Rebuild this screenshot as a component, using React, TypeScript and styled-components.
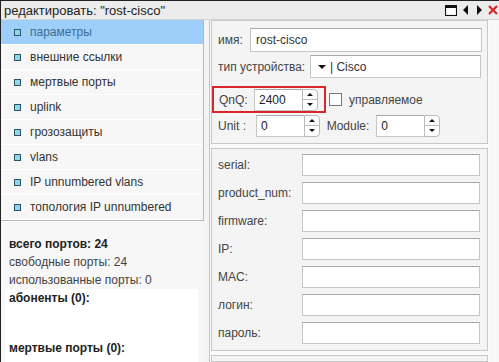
import React from "react";
import styled, { createGlobalStyle } from "styled-components";

const Global = createGlobalStyle`
  html, body { margin: 0; padding: 0; background: #fff; }
  body { font-family: "Liberation Sans", Arial, sans-serif; font-size: 12px; color: #333; }
  * { box-sizing: border-box; }
`;

const Win = styled.div`
  width: 499px;
  height: 362px;
  display: flex;
  flex-direction: column;
  border-top: 1px solid #222;
  border-left: 1px solid #222;
  overflow: hidden;
  background: #f4f4f4;
`;

const TitleBar = styled.div`
  height: 19px;
  flex: none;
  display: flex;
  align-items: center;
  padding-left: 3px;
  background: #ececec;
  border-bottom: 1px solid #d6d6d6;
`;

const Title = styled.div`
  flex: 1;
  font-size: 13px;
  color: #222;
`;

const TitleIcons = styled.div`
  display: flex;
  align-items: center;
  gap: 0;
  height: 19px;
`;

const IconSlot = styled.span<{ w: number }>`
  width: ${(p) => p.w}px;
  display: flex;
  align-items: center;
  justify-content: center;
`;

const Body = styled.div`
  flex: 1;
  display: flex;
  min-height: 0;
`;

const LeftCol = styled.div`
  width: 203px;
  flex: none;
  display: flex;
  flex-direction: column;
  background: #f7f7f7;
`;

const List = styled.div`
  border-right: 1px solid #b9b9b9;
  border-bottom: 1px solid #b9b9b9;
  background: #fff;
`;

const Item = styled.div<{ active?: boolean }>`
  height: 25px;
  display: flex;
  align-items: center;
  padding-left: 13px;
  gap: 9px;
  background: ${(p) => (p.active ? "#9dcffa" : "#f7f7f7")};
  border-bottom: 1px solid #fff;
  color: ${(p) => (p.active ? "#3d6b94" : "#333")};
  font-size: 12px;
`;

const Bullet = styled.span`
  width: 7px;
  height: 7px;
  border: 1px solid #2b5566;
  background: #8fd6ea;
  flex: none;
`;

const Stats = styled.div`
  padding: 14px 0 0 8px;
  display: flex;
  flex-direction: column;
`;

const StatLine = styled.div<{ bold?: boolean }>`
  height: 18px;
  line-height: 18px;
  font-weight: ${(p) => (p.bold ? "bold" : "normal")};
  color: ${(p) => (p.bold ? "#222" : "#444")};
`;

const SubBox = styled.div`
  background: #fff;
  margin-left: -4px;
  padding-left: 4px;
  width: 193px;
  display: flex;
  flex-direction: column;
`;

const Gap = styled.div<{ h: number }>`
  height: ${(p) => p.h}px;
`;

const Splitter = styled.div`
  width: 5px;
  flex: none;
  background: #f4f4f4;
`;

const RightCol = styled.div`
  width: 280px;
  flex: none;
  border-left: 1px solid #c4c4c4;
  background: #fafafa;
  display: flex;
  flex-direction: column;
  gap: 4px;
  padding-left: 1px;
`;

const RightRest = styled.div`
  flex: 1;
  background: #f7f7f7;
`;

const Block = styled.div<{ grow?: boolean }>`
  border: 1px solid #c8c8c8;
  background: #f4f4f4;
  padding: ${(p) => (p.grow ? "0" : "5px 0 6px 6px")};
  ${(p) => (p.grow ? "flex: 1;" : "")}
  display: flex;
  flex-direction: column;
  width: 277px;
`;

const Row = styled.div<{ h: number; mt?: number }>`
  height: ${(p) => p.h}px;
  margin-top: ${(p) => p.mt ?? 0}px;
  display: flex;
  align-items: center;
`;

const Label = styled.span<{ w?: number }>`
  color: #444;
  font-size: 12px;
  white-space: nowrap;
  ${(p) => (p.w ? `width: ${p.w}px; flex: none;` : "")}
`;

const TextInput = styled.div<{ w: number; h?: number }>`
  width: ${(p) => p.w}px;
  height: ${(p) => p.h ?? 22}px;
  border: 1px solid #c6c6c6;
  border-top-color: #a8a8a8;
  background: #fff;
  display: flex;
  align-items: center;
  padding-left: 5px;
  color: #333;
  font-size: 12px;
`;

const Select = styled(TextInput)`
  gap: 4px;
  padding-left: 7px;
`;

const QnQBox = styled.div`
  margin-left: -6px;
  height: 27px;
  width: 114px;
  border: 2px solid #d9262b;
  display: flex;
  align-items: center;
  padding-left: 5px;
`;

const Spin = styled.div<{ ml?: number }>`
  display: flex;
  height: 22px;
  margin-left: ${(p) => p.ml ?? 0}px;
`;

const SpinField = styled.div`
  width: 48px;
  height: 22px;
  border: 1px solid #c6c6c6;
  border-top-color: #a8a8a8;
  border-right: none;
  background: #fff;
  display: flex;
  align-items: center;
  padding-left: 4px;
  color: #222;
  font-size: 12px;
`;

const SpinBtns = styled.div`
  width: 16px;
  height: 22px;
  border: 1px solid #bcbcbc;
  border-radius: 0 4px 4px 0;
  background: #fff;
  display: flex;
  flex-direction: column;
`;

const SpinBtn = styled.div<{ top?: boolean }>`
  flex: 1;
  display: flex;
  align-items: center;
  justify-content: center;
  ${(p) => (p.top ? "border-bottom: 1px solid #bcbcbc;" : "")}
`;

const Check = styled.span`
  width: 13px;
  height: 13px;
  border: 1px solid #777;
  background: #fff;
  margin-left: 3px;
  margin-right: 7px;
  flex: none;
`;

const Tri = ({ dir, size = 4 }: { dir: "up" | "down" | "left" | "right"; size?: number }) => {
  const s = size;
  const pts =
    dir === "up"
      ? `0,${s} ${s},0 ${2 * s},${s}`
      : dir === "down"
      ? `0,0 ${2 * s},0 ${s},${s}`
      : dir === "left"
      ? `${s},0 ${s},${2 * s} 0,${s}`
      : `0,0 ${s},${s} 0,${2 * s}`;
  const w = dir === "up" || dir === "down" ? 2 * s : s;
  const h = dir === "up" || dir === "down" ? s : 2 * s;
  return (
    <svg width={w} height={h} viewBox={`0 0 ${w} ${h}`}>
      <polygon points={pts} fill="#111" />
    </svg>
  );
};

const Spinner = ({ value, ml }: { value: string; ml?: number }) => (
  <Spin ml={ml}>
    <SpinField>{value}</SpinField>
    <SpinBtns>
      <SpinBtn top>
        <Tri dir="up" size={3} />
      </SpinBtn>
      <SpinBtn>
        <Tri dir="down" size={3} />
      </SpinBtn>
    </SpinBtns>
  </Spin>
);

const items = [
  "параметры",
  "внешние ссылки",
  "мертвые порты",
  "uplink",
  "грозозащиты",
  "vlans",
  "IP unnumbered vlans",
  "топология IP unnumbered",
];

const fields = ["serial:", "product_num:", "firmware:", "IP:", "MAC:", "логин:", "пароль:"];

export default function App() {
  return (
    <>
      <Global />
      <Win>
        <TitleBar>
          <Title>редактировать: "rost-cisco"</Title>
          <TitleIcons>
            <IconSlot w={14}>
              <svg width="12" height="11" viewBox="0 0 12 11">
                <rect x="0.5" y="0.5" width="11" height="10" fill="none" stroke="#111" />
                <rect x="0.5" y="0.5" width="11" height="2.5" fill="#111" />
                <rect x="2" y="3" width="8" height="6" fill="#fff" />
              </svg>
            </IconSlot>
            <IconSlot w={14}>
              <Tri dir="left" size={5} />
            </IconSlot>
            <IconSlot w={14}>
              <Tri dir="right" size={5} />
            </IconSlot>
            <IconSlot w={13}>
              <svg width="10" height="10" viewBox="0 0 10 10">
                <path d="M1 1 L9 9 M9 1 L1 9" stroke="#e0241f" strokeWidth="2.2" />
              </svg>
            </IconSlot>
          </TitleIcons>
        </TitleBar>
        <Body>
          <LeftCol>
            <List>
              {items.map((t, i) => (
                <Item key={t} active={i === 0}>
                  <Bullet />
                  {t}
                </Item>
              ))}
            </List>
            <Stats>
              <StatLine bold>всего портов: 24</StatLine>
              <StatLine>свободные порты: 24</StatLine>
              <StatLine>использованные порты: 0</StatLine>
              <SubBox>
                <StatLine bold>абоненты (0):</StatLine>
                <Gap h={32} />
                <StatLine bold>мертвые порты (0):</StatLine>
                <Gap h={20} />
              </SubBox>
            </Stats>
          </LeftCol>
          <Splitter />
          <RightCol>
            <Block>
              <Row h={24} mt={2}>
                <Label w={32}>имя:</Label>
                <TextInput w={232} h={24}>rost-cisco</TextInput>
              </Row>
              <Row h={23} mt={3}>
                <Label w={92}>тип устройства:</Label>
                <Select w={171} h={23}>
                  <Tri dir="down" size={4} />
                  <span>| Cisco</span>
                </Select>
              </Row>
              <Row h={27} mt={8}>
                <QnQBox>
                  <Label w={35}>QnQ:</Label>
                  <Spinner value="2400" />
                </QnQBox>
                <Check />
                <Label>управляемое</Label>
              </Row>
              <Row h={23} mt={1}>
                <Label w={38}>Unit :</Label>
                <Spinner value="0" />
                <Label>&nbsp;&nbsp;Module:</Label>
                <Spinner value="0" ml={7} />
              </Row>
            </Block>
            <Block>
              {fields.map((f, i) => (
                <Row key={f} h={22} mt={i === 0 ? 0 : 6}>
                  <Label w={84}>{f}</Label>
                  <TextInput w={178} />
                </Row>
              ))}
            </Block>
            <Block grow />
          </RightCol>
          <RightRest />
        </Body>
      </Win>
    </>
  );
}
